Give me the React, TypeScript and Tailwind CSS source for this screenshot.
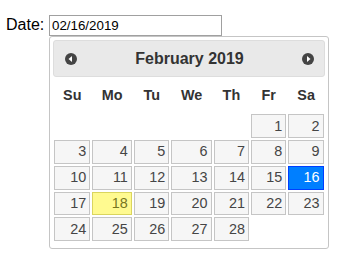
import React from "react";

const weeks: (number | null)[][] = [
  [null, null, null, null, null, 1, 2],
  [3, 4, 5, 6, 7, 8, 9],
  [10, 11, 12, 13, 14, 15, 16],
  [17, 18, 19, 20, 21, 22, 23],
  [24, 25, 26, 27, 28, null, null],
];

const days = ["Su", "Mo", "Tu", "We", "Th", "Fr", "Sa"];

function CircleArrow({ dir }: { dir: "w" | "e" }) {
  return (
    <svg width="12" height="12" viewBox="0 0 12 12">
      <circle cx="6" cy="6" r="6" fill="#444" />
      {dir === "w" ? (
        <polygon points="3.5,6 7,3 7,9" fill="#fff" />
      ) : (
        <polygon points="8.5,6 5,3 5,9" fill="#fff" />
      )}
    </svg>
  );
}

function DayCell({ day }: { day: number }) {
  // today = 18, selected = 16
  let tone = "bg-[#f6f6f6] border-[#c5c5c5] text-[#454545]";
  if (day === 18) tone = "bg-[#fffa90] border-[#dad55e] text-[#777620]";
  if (day === 16) tone = "bg-[#007fff] border-[#003eff] text-white";

  return (
    <a className={`block border p-[3.2px] text-right leading-[15.4px] ${tone}`}>
      {day}
    </a>
  );
}

export default function App() {
  return (
    <div className="min-h-screen bg-white font-['Liberation_Sans',Arial,sans-serif] leading-[normal] text-black">
      {/* Field */}
      <div className="flex items-baseline pl-[6px] pt-[15px] text-[16px]">
        <label className="w-[43px]">Date:</label>
        <input
          readOnly
          value="02/16/2019"
          className="h-[21px] w-[173px] border border-[#a0a0a0] px-[2px] text-[13.33px] outline-none"
        />
      </div>

      {/* Datepicker */}
      <div className="ml-[49px] w-[280px] rounded-[3px] border border-[#c5c5c5] bg-white px-[3.2px] pt-[3.2px] text-[16px] text-[#333]">
        {/* Header */}
        <div className="flex h-[37px] items-center rounded-[3px] border border-[#dddddd] bg-[#e9e9e9] pl-[11px] pr-[10px]">
          <CircleArrow dir="w" />
          <div className="flex-1 text-center font-bold">February 2019</div>
          <CircleArrow dir="e" />
        </div>

        {/* Calendar */}
        <table className="mb-[5.76px] w-full text-[14.4px]">
          <thead>
            <tr>
              {days.map((d) => (
                <th key={d} className="px-[4.32px] py-[10.08px] text-center font-bold leading-[16px]">
                  {d}
                </th>
              ))}
            </tr>
          </thead>
          <tbody>
            {weeks.map((week, i) => (
              <tr key={i}>
                {week.map((day, j) => (
                  <td key={j} className="p-px">
                    {day !== null && <DayCell day={day} />}
                  </td>
                ))}
              </tr>
            ))}
          </tbody>
        </table>
      </div>
    </div>
  );
}
